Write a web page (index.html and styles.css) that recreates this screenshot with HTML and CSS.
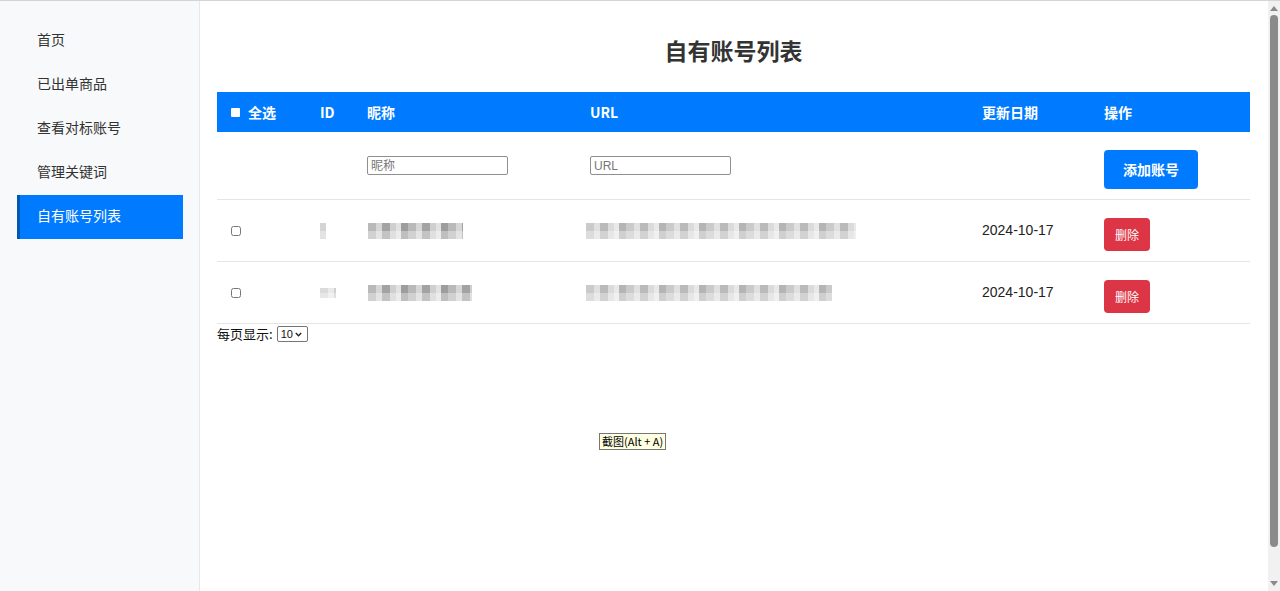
FILE: index.html
```html
<!DOCTYPE html>
<html lang="zh-CN">
  <head>
    <meta charset="UTF-8" />
    <meta name="viewport" content="width=device-width, initial-scale=1.0" />
    <title>自有账号列表</title>
    <link rel="stylesheet" href="styles.css">
  </head>
  <body>
    <aside class="sidebar">
      <a class="nav-item" href="#">首页</a>
      <a class="nav-item" href="#">已出单商品</a>
      <a class="nav-item" href="#">查看对标账号</a>
      <a class="nav-item" href="#">管理关键词</a>
      <a class="nav-item active" href="#">自有账号列表</a>
    </aside>

    <main class="content">
      <h1>自有账号列表</h1>
      <table class="accounts">
        <colgroup>
          <col style="width: 91px" />
          <col style="width: 47px" />
          <col style="width: 223px" />
          <col style="width: 392px" />
          <col style="width: 122px" />
          <col style="width: 158px" />
        </colgroup>
        <thead>
          <tr>
            <th><span class="check-all"><span class="box"></span>全选</span></th>
            <th>ID</th>
            <th>昵称</th>
            <th>URL</th>
            <th>更新日期</th>
            <th>操作</th>
          </tr>
        </thead>
        <tbody>
          <tr class="add-row">
            <td></td>
            <td></td>
            <td><input class="field" type="text" placeholder="昵称" /></td>
            <td><input class="field" type="text" placeholder="URL" /></td>
            <td></td>
            <td><button class="btn-add">添加账号</button></td>
          </tr>
          <tr>
            <td><input class="row-check" type="checkbox" /></td>
            <td><span class="blur b-id1"></span></td>
            <td><span class="blur b-nick1"></span></td>
            <td><span class="blur b-url1"></span></td>
            <td>2024-10-17</td>
            <td><button class="btn-del">删除</button></td>
          </tr>
          <tr>
            <td><input class="row-check" type="checkbox" /></td>
            <td><span class="blur b-id2"></span></td>
            <td><span class="blur b-nick2"></span></td>
            <td><span class="blur b-url2"></span></td>
            <td>2024-10-17</td>
            <td><button class="btn-del">删除</button></td>
          </tr>
        </tbody>
      </table>

      <div class="pager">
        <label>每页显示:</label>
        <div class="page-size">
          <span>10</span>
          <svg width="7" height="5" viewBox="0 0 7 5"><path d="M0.8 1 L3.5 3.7 L6.2 1" fill="none" stroke="#222" stroke-width="1.4"/></svg>
        </div>
      </div>

      <div class="tooltip">截图(Alt + A)</div>
    </main>

    <div class="scrollbar">
      <div class="arrow up"></div>
      <div class="thumb"></div>
      <div class="arrow down"></div>
    </div>
  </body>
</html>
```

FILE: styles.css
```css
* {
  margin: 0;
  padding: 0;
  box-sizing: border-box;
}
body {
  display: flex;
  height: 591px;
  overflow: hidden;
  border-top: 1px solid #d4d4d4;
  font-family: "Liberation Sans", "Noto Sans CJK SC", sans-serif;
  font-size: 14px;
  color: #222;
  background: #fff;
}

/* sidebar */
.sidebar {
  width: 200px;
  flex-shrink: 0;
  padding: 18px 16px 0 17px;
  background: #f8f9fa;
  border-right: 1px solid #e6e8ea;
  display: flex;
  flex-direction: column;
}
.nav-item {
  display: block;
  height: 44px;
  line-height: 41px;
  padding-bottom: 3px;
  padding-left: 20px;
  color: #333;
  text-decoration: none;
  font-family: "Noto Sans CJK SC", sans-serif;
  font-size: 14px;
}
.nav-item.active {
  background: #007bff;
  color: #fff;
  border-left: 3px solid #0056b3;
  padding-left: 17px;
}

/* main */
.content {
  flex: 1;
  position: relative;
  padding: 0 18px 0 17px;
}
.content h1 {
  font-family: "Noto Sans CJK SC", sans-serif;
  font-size: 23px;
  line-height: 32px;
  font-weight: 700;
  color: #333;
  text-align: center;
  padding: 33px 0 26px;
}

.accounts {
  width: 100%;
  border-collapse: collapse;
  table-layout: fixed;
}
.accounts th {
  background: #007bff;
  color: #fff;
  font-family: "Noto Sans CJK SC", sans-serif;
  font-weight: 700;
  font-size: 14px;
  line-height: 19px;
  text-align: left;
  padding: 10px 12px;
}
.accounts td {
  padding: 10px 12px;
  vertical-align: middle;
  border-bottom: 1px solid #e3e5e8;
  line-height: 19px;
}
.check-all {
  display: inline-flex;
  align-items: center;
  margin-left: 2px;
}
.check-all .box {
  width: 9px;
  height: 9px;
  background: #fff;
  border-radius: 1px;
  margin-right: 8px;
}
.row-check {
  width: 10px;
  height: 10px;
  margin-left: 2px;
  display: block;
}

.field {
  width: 141px;
  height: 19px;
  border: 1px solid #8f8f8f;
  border-radius: 2px;
  padding: 0 3px;
  font-family: "Liberation Sans", "Noto Sans CJK SC", sans-serif;
  font-size: 12px;
  color: #333;
  display: block;
}
.field::placeholder {
  color: #777;
}

.btn-add {
  margin-top: 8px;
  padding: 10px 19px;
  border: none;
  border-radius: 4px;
  background: #007bff;
  color: #fff;
  font-family: "Noto Sans CJK SC", sans-serif;
  font-weight: 700;
  font-size: 14px;
  line-height: 19px;
  display: block;
}
.btn-del {
  margin-top: 8px;
  padding: 8px 11px;
  border: none;
  border-radius: 4px;
  background: #dc3545;
  color: #fff;
  font-family: "Noto Sans CJK SC", sans-serif;
  font-size: 12px;
  line-height: 17px;
  display: block;
}

/* pixelated (masked) values */
.blur {
  display: block;
  height: 16px;
  background:
    linear-gradient(to bottom, rgba(255,255,255,0) 50%, rgba(255,255,255,0.35) 50%),
    repeating-linear-gradient(to right, #b9b9b9 0 8px, #d6d6d6 8px 14px, #a3a3a3 14px 22px, #cfcfcf 22px 28px, #e2e2e2 28px 33px, #9d9d9d 33px 40px);
}
.b-id1 { width: 6px; opacity: 0.6; }
.b-nick1 { width: 95px; margin-left: 1px; }
.b-url1 { width: 270px; margin-left: -4px; opacity: 0.75; }
.b-id2 { width: 16px; opacity: 0.5; height: 10px; }
.b-nick2 { width: 104px; margin-left: 1px; }
.b-url2 { width: 246px; margin-left: -4px; opacity: 0.75; }

.pager {
  margin-top: 0;
  display: flex;
  align-items: center;
  gap: 4px;
  font-family: "Noto Sans CJK SC", sans-serif;
  font-size: 13px;
  line-height: 20px;
  color: #111;
}
.page-size {
  width: 31px;
  height: 16px;
  display: flex;
  align-items: center;
  gap: 2px;
  padding-left: 3px;
  border: 1px solid #767676;
  border-radius: 2px;
  background: #fff;
  font-family: "Liberation Sans", sans-serif;
  font-size: 11px;
  line-height: 14px;
  color: #111;
}

/* Windows screenshot hint overlaying the page */
.tooltip {
  position: absolute;
  left: 399px;
  top: 432px;
  height: 17px;
  padding: 0 2px;
  background: #ffffe1;
  border: 1px solid #767676;
  font-family: "Noto Sans CJK SC", sans-serif;
  font-size: 11px;
  line-height: 15px;
  color: #000;
}

/* scrollbar strip */
.scrollbar {
  width: 12px;
  flex-shrink: 0;
  background: #f1f1f1;
  display: flex;
  flex-direction: column;
  align-items: center;
  padding: 5px 0;
}
.scrollbar .arrow {
  width: 0;
  height: 0;
  border-left: 4px solid transparent;
  border-right: 4px solid transparent;
}
.scrollbar .up {
  border-bottom: 5px solid #8a8a8a;
}
.scrollbar .down {
  border-top: 5px solid #8a8a8a;
}
.scrollbar .thumb {
  width: 8px;
  flex: 1;
  margin: 4px 0 34px;
  background: #8a8a8a;
  border-radius: 4px;
}
```
